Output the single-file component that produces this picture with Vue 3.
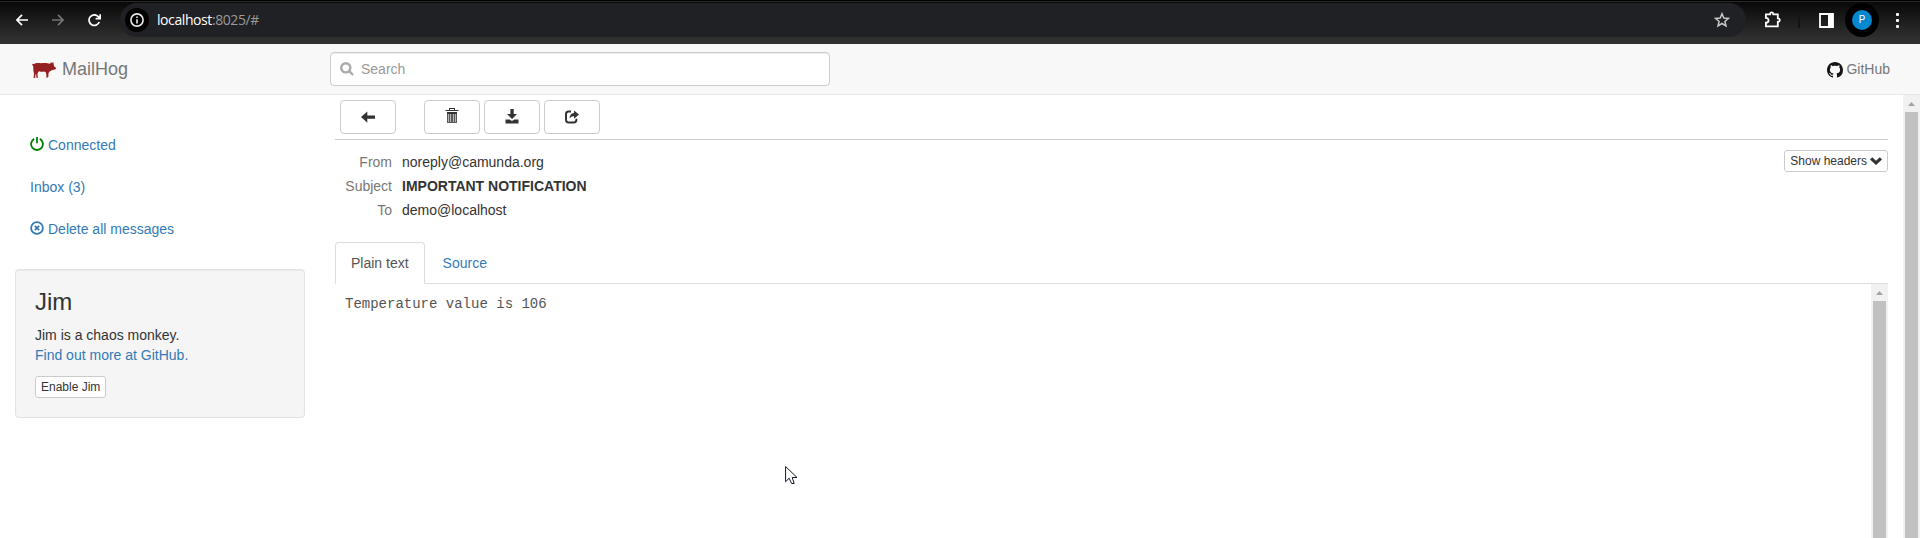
<script setup>
import { ref } from 'vue'

const links = [
  { id: 'connected', label: 'Connected', icon: 'power' },
  { id: 'inbox', label: 'Inbox (3)', icon: '' },
  { id: 'delete', label: 'Delete all messages', icon: 'remove' },
]
const headers = [
  { name: 'From', value: 'noreply@camunda.org', strong: false },
  { name: 'Subject', value: 'IMPORTANT NOTIFICATION', strong: true },
  { name: 'To', value: 'demo@localhost', strong: false },
]
const query = ref('')
</script>

<template>
  <div class="window">
    <header class="chrome">
      <svg class="nav-icon back" viewBox="0 0 12 12"><path d="M12 6H1M6 .8L.9 6L6 11.2" /></svg>
      <svg class="nav-icon forward" viewBox="0 0 12 12"><path d="M0 6H11M6 .8L11.1 6L6 11.2" /></svg>
      <svg class="nav-icon reload" viewBox="0 0 13 13"><path d="M11.3 8A5.3 5.3 0 1 1 10.4 2.7L11.6 4.1M12.2 .2V4.6H7.6" /></svg>
      <div class="omnibox">
        <span class="info">
          <svg viewBox="0 0 14 14"><circle cx="7" cy="7" r="6.1" /><path d="M7 6.2V10.4M7 3.6V5.1" /></svg>
        </span>
        <span class="url"><b>localhost</b>:8025/#</span>
        <svg class="star" viewBox="0 0 16 16"><path d="M8 1.7L9.8 6L14.4 6.4L10.9 9.4L12 14L8 11.5L4 14L5.1 9.4L1.6 6.4L6.2 6Z" /></svg>
      </div>
      <svg class="puzzle" viewBox="0 0 17 17"><path d="M1.9 3.3H6.1C5.9 .8 9.5 .8 9.3 3.3H13.8V7.4C16.4 7.2 16.4 11 13.8 10.8V15.3H1.9V11.7C5.4 11.7 5.4 6.8 1.9 6.9Z" /></svg>
      <span class="divider"></span>
      <svg class="panel" viewBox="0 0 15 15"><path class="outline" d="M1 1H14V14H1Z" /><path class="fill" d="M9 1H14V14H9Z" /></svg>
      <span class="profile"><span>P</span></span>
      <span class="dots"><i></i><i></i><i></i></span>
    </header>

    <nav class="navbar">
      <a class="brand">
        <svg viewBox="0 0 24 16"><path d="M0 2.4L.9 1.7L1.8 2.3C3.2 1 5 .9 7 1.1C10 1.4 13 .7 16.4 1.5L18.2 1.7L18.8 .3L20 1L21.2 0L21.7 2.4L22.2 4.6L24 5.8L23.7 7.2L21.6 7.8L19.2 8.6L17.4 9.8L16.4 11.4V14.8L15.6 15.4H13.8L14.6 14.2L13.9 10.6L12.6 9.6C10.5 10 8.6 9.8 7 9.3L5.8 10.8L5.5 12.6L6 15.8H4.4L4.2 12.6L3.4 12.4L3.2 16H1.6L2 11.6L1.4 9L1.2 4.2Z" /></svg>
        <span>MailHog</span>
      </a>
      <label class="search">
        <svg viewBox="0 0 14 14"><circle cx="5.8" cy="5.8" r="4.6" /><path d="M9.2 9.2L13 13" /></svg>
        <input v-model="query" type="text" placeholder="Search">
      </label>
      <a class="github">
        <svg viewBox="0 0 16 16"><path d="M8 0C3.58 0 0 3.58 0 8c0 3.54 2.29 6.53 5.47 7.59.4.07.55-.17.55-.38 0-.19-.01-.82-.01-1.49-2.01.37-2.53-.49-2.69-.94-.09-.23-.48-.94-.82-1.13-.28-.15-.68-.52-.01-.53.63-.01 1.08.58 1.23.82.72 1.21 1.87.87 2.33.66.07-.52.28-.87.51-1.07-1.78-.2-3.64-.89-3.64-3.95 0-.87.31-1.59.82-2.15-.08-.2-.36-1.02.08-2.12 0 0 .67-.21 2.2.82.64-.18 1.32-.27 2-.27s1.36.09 2 .27c1.53-1.04 2.2-.82 2.2-.82.44 1.1.16 1.92.08 2.12.51.56.82 1.27.82 2.15 0 3.07-1.87 3.75-3.65 3.95.29.25.54.73.54 1.48 0 1.07-.01 1.93-.01 2.2 0 .21.15.46.55.38A8.01 8.01 0 0 0 16 8c0-4.42-3.58-8-8-8Z" /></svg>
        <span>GitHub</span>
      </a>
    </nav>

    <div class="body">
      <aside class="sidebar">
        <ul>
          <li v-for="link in links" :key="link.id">
            <a>
              <svg v-if="link.icon === 'power'" class="power" viewBox="0 0 14 14"><path d="M4.2 1.9A5.9 5.9 0 1 0 9.8 1.9M7 0V6.2" /></svg>
              <svg v-if="link.icon === 'remove'" class="remove" viewBox="0 0 14 14"><circle cx="7" cy="7" r="5.9" /><path d="M4.8 4.8L9.2 9.2M9.2 4.8L4.8 9.2" /></svg>
              <span>{{ link.label }}</span>
            </a>
          </li>
        </ul>
        <section class="well">
          <h3>Jim</h3>
          <p>Jim is a chaos monkey.<br><a>Find out more at GitHub.</a></p>
          <button class="btn small">Enable Jim</button>
        </section>
      </aside>

      <main>
        <div class="toolbar">
          <button class="btn first"><svg viewBox="0 0 14 14"><path d="M0 7L6.3 1.4V5.4H14V8.7H6.3V12.7Z" /></svg></button>
          <button class="btn">
            <svg class="trash" viewBox="0 0 14 16">
              <path d="M4 0H10V2H13.5V3H.5V2H4ZM5 1V2H9V1ZM2 4H12V6H2Z" />
              <path class="bin" d="M2 6H3V14H2ZM4 6H5V14H4ZM6 6H8V14H6ZM9 6H10V14H9ZM11 6H12V14H11ZM2 14H12V15H2Z" />
              <path class="slats" d="M3 6H4V14H3ZM5 6H6V14H5ZM8 6H9V14H8ZM10 6H11V14H10Z" />
            </svg>
          </button>
          <button class="btn"><svg class="download" viewBox="0 0 14 15"><path d="M5.4 0H8.7V5H12L7 10L2 5H5.4ZM.5 10.4H4.6L7 12L9.4 10.4H13.5V14.4H.5Z" /></svg></button>
          <button class="btn"><svg viewBox="0 0 14 14"><path class="share-box" d="M6 1.6H3.6Q1 1.6 1 4.2V9.8Q1 12.4 3.6 12.4H8.8Q11.4 12.4 11.4 9.8V8.8" /><path d="M9 .6L14 4.6L9 8.7V6.3Q6.2 6.2 4.5 8.6Q4.8 3.5 9 3.1Z" /></svg></button>
        </div>

        <section class="details">
          <dl>
            <template v-for="item in headers" :key="item.name">
              <dt>{{ item.name }}</dt>
              <dd :class="{ strong: item.strong }">{{ item.value }}</dd>
            </template>
          </dl>
          <button class="btn small">Show headers <svg viewBox="0 0 12 8"><path d="M2.2 .2L6 3.8L9.8 .2L12 2.4L6 8L0 2.4Z" /></svg></button>
        </section>

        <div class="tabs"><a class="active">Plain text</a><a>Source</a></div>
        <div class="preview">
          <pre>Temperature value is 106</pre>
          <div class="scrollbar"><span class="up"></span><span class="thumb"></span></div>
        </div>
      </main>
      <div class="scrollbar"><span class="up"></span><span class="thumb"></span></div>
    </div>

    <svg class="cursor" viewBox="0 0 13 19"><path d="M.6 1V16.2L4.2 12.7L6.6 18H9.2L7.2 12H12Z" /></svg>
  </div>
</template>

<style>
body {
  margin: 0;
  overflow: hidden;
}
</style>

<style scoped>
* {
  box-sizing: border-box;
}

.window {
  position: relative;
  display: flex;
  flex-direction: column;
  height: 538px;
  background: #fff;
  color: #333;
  font: 14px/20px "Liberation Sans", Arial, sans-serif;
}

svg {
  display: block;
  flex: none;
}

.chrome {
  display: flex;
  align-items: center;
  height: 44px;
  padding: 0 12px 4px 16px;
  background: linear-gradient(#000 0 1px, #292929 1px 2px, #090909 2px, #303030 90%);
}

.nav-icon {
  width: 12px;
  height: 12px;
  fill: none;
  stroke: #fff;
  stroke-width: 1.7;
}

.forward {
  margin-left: 24px;
  stroke: #747474;
}

.reload {
  width: 13px;
  height: 13px;
  margin-left: 24px;
}

.omnibox {
  display: flex;
  align-items: center;
  width: 1626px;
  height: 34px;
  margin-left: 19px;
  padding: 0 16px 0 5px;
  border-radius: 17px;
  background: #202124;
}

.info {
  display: grid;
  place-items: center;
  width: 24px;
  height: 24px;
  border-radius: 50%;
  background: #000;
}

.info svg {
  width: 14px;
  height: 14px;
  fill: none;
  stroke: #e8eaed;
  stroke-width: 1.6;
}

.url {
  margin-left: 8px;
  color: #9a9a9a;
  font: 14px/20px "Open Sans", "Noto Sans", sans-serif;
  letter-spacing: -0.42px;
}

.url b {
  color: #fff;
  font-weight: 400;
}

.star {
  width: 16px;
  height: 16px;
  margin-left: auto;
  fill: none;
  stroke: #c7c7c7;
  stroke-width: 1.5;
}

.puzzle {
  width: 17px;
  height: 17px;
  margin: -2px 0 0 18px;
  fill: none;
  stroke: #fff;
  stroke-width: 1.8;
}

.divider {
  width: 2px;
  height: 15px;
  margin-left: 17px;
  background: #141414;
}

.panel {
  width: 15px;
  height: 15px;
  margin-left: 19px;
}

.panel .outline {
  fill: none;
  stroke: #fff;
  stroke-width: 1.8;
}

.panel .fill {
  fill: #fff;
}

.profile {
  display: grid;
  place-items: center;
  width: 34px;
  height: 34px;
  margin-left: 11px;
  border-radius: 50%;
  background: #000;
}

.profile span {
  width: 20px;
  height: 20px;
  border-radius: 50%;
  background: #0288d1;
  color: #fff;
  font: 10px/19px Roboto, sans-serif;
  text-align: center;
}

.dots {
  display: grid;
  gap: 3px;
  margin-left: 17px;
}

.dots i {
  width: 3px;
  height: 3px;
  border-radius: 1px;
  background: #fff;
}

.navbar {
  display: flex;
  align-items: center;
  height: 51px;
  padding: 0 30px 1px 32px;
  border-bottom: 1px solid #e7e7e7;
  background: #f8f8f8;
  color: #777;
}

.brand {
  display: flex;
  align-items: center;
  gap: 6px;
  width: 298px;
  font-size: 18px;
}

.brand svg {
  width: 24px;
  height: 16px;
  margin-top: 2px;
  fill: #952022;
}

.search {
  display: flex;
  align-items: center;
  width: 500px;
  height: 34px;
  padding: 0 9px;
  border: 1px solid #ccc;
  border-radius: 4px;
  background: #fff;
  box-shadow: inset 0 1px 1px rgba(0, 0, 0, 0.075);
}

.search svg {
  width: 14px;
  height: 14px;
  fill: none;
  stroke: #aaa;
  stroke-width: 2.4;
}

.search input {
  flex: 1;
  margin-left: 7px;
  padding: 0;
  border: 0;
  outline: 0;
  background: none;
  font: inherit;
}

.search input::placeholder {
  color: #999;
}

.github {
  display: flex;
  align-items: center;
  gap: 3px;
  margin-left: auto;
}

.github svg {
  width: 16px;
  height: 16px;
  margin-top: 2px;
  fill: #161514;
}

.body {
  display: flex;
  flex: 1;
  min-height: 0;
}

.sidebar {
  width: 320px;
  padding: 30px 15px 0;
}

.sidebar ul {
  display: grid;
  gap: 2px;
  margin: 0;
  padding: 0;
  list-style: none;
}

.sidebar li a {
  display: flex;
  align-items: center;
  gap: 4px;
  height: 40px;
  padding: 0 15px;
}

.sidebar a {
  color: #337ab7;
}

.sidebar li svg {
  width: 14px;
  height: 14px;
  margin-top: -2px;
  fill: none;
  stroke: #337ab7;
  stroke-width: 1.8;
}

.sidebar li .power {
  stroke: green;
}

.well {
  width: 290px;
  height: 149px;
  margin-top: 20px;
  padding: 19px;
  border: 1px solid #e3e3e3;
  border-radius: 4px;
  background: #f5f5f5;
  box-shadow: inset 0 1px 1px rgba(0, 0, 0, 0.05);
}

.well h3 {
  margin: 0 0 10px;
  font-size: 24px;
  font-weight: 400;
  line-height: 26px;
}

.well p {
  margin: 0 0 11px;
}

.btn {
  display: flex;
  align-items: center;
  justify-content: center;
  width: 56px;
  height: 34px;
  padding: 0;
  border: 1px solid #ccc;
  border-radius: 4px;
  background: #fff;
  color: #333;
  font: inherit;
}

.btn svg {
  width: 14px;
  height: 14px;
  margin-top: -1px;
  fill: #333;
}

.btn.small {
  width: auto;
  height: 22px;
  padding: 0 5px;
  border-radius: 3px;
  font-size: 12px;
  line-height: 18px;
}

main {
  display: flex;
  flex: 1;
  flex-direction: column;
  min-width: 0;
  padding: 0 15px;
}

.toolbar {
  display: flex;
  gap: 4px;
  height: 45px;
  padding: 5px 5px 0;
  border-bottom: 1px solid #ccc;
}

.toolbar .first {
  margin-right: 24px;
}

.btn .trash {
  height: 16px;
  margin-top: -2px;
}

.trash .slats {
  fill: #b5b5b5;
}

.trash .bin {
  fill: #5a5a5a;
}

.btn .download {
  height: 15px;
}

.share-box {
  fill: none;
  stroke: #333;
  stroke-width: 2;
}

.details {
  display: flex;
  align-items: flex-start;
  justify-content: space-between;
  height: 102px;
  padding-top: 10px;
}

.details dl {
  display: grid;
  grid-template-columns: 57px auto;
  grid-auto-rows: 24px;
  column-gap: 10px;
  margin: 0;
  line-height: 24px;
}

.details dt {
  color: #777;
  text-align: right;
}

.details dd {
  margin: 0;
}

.details .strong {
  font-weight: 700;
}

.details .btn svg {
  width: 12px;
  height: 8px;
  margin-left: 3px;
}

.tabs {
  display: flex;
  height: 42px;
  border-bottom: 1px solid #ddd;
}

.tabs a {
  height: 42px;
  margin-right: 2px;
  padding: 10px 15px;
  border: 1px solid transparent;
  color: #337ab7;
}

.tabs .active {
  border-color: #ddd;
  border-bottom-color: #fff;
  border-radius: 4px 4px 0 0;
  color: #555;
}

.preview {
  display: flex;
  flex: 1;
  justify-content: space-between;
}

pre {
  margin: 0;
  padding: 10px;
  color: #555;
  font: 14px/20px "Liberation Mono", "Courier New", monospace;
}

.scrollbar {
  display: flex;
  flex: none;
  flex-direction: column;
  width: 17px;
  padding: 0 2px;
  background: #f1f1f1;
}

.up {
  align-self: center;
  width: 7px;
  height: 4px;
  margin: 7px 0 6px;
  background: #a3a3a3;
  clip-path: polygon(50% 0, 100% 100%, 0 100%);
}

.thumb {
  flex: 1;
  background: #c1c1c1;
}

.cursor {
  position: absolute;
  top: 465px;
  left: 785px;
  width: 13px;
  height: 20px;
  fill: #fff;
  stroke: #111827;
}
</style>
